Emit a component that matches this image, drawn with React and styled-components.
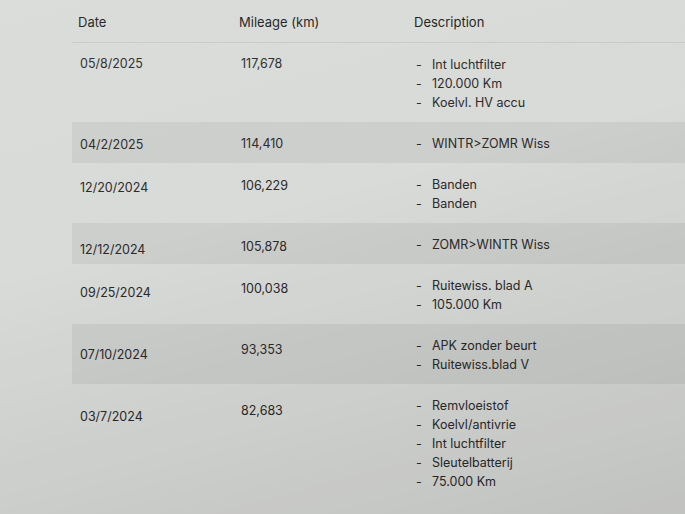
import React from 'react';
import styled, { createGlobalStyle } from 'styled-components';

const GlobalStyle = createGlobalStyle`
  html, body {
    margin: 0;
    padding: 0;
    background: #d9dbd8;
    font-family: Inter, "Liberation Sans", sans-serif;
  }
`;

// the photo gets darker towards the bottom right corner
const Shade = styled.div`
  position: fixed;
  inset: 0;
  pointer-events: none;
  background: linear-gradient(165deg, rgba(255, 255, 255, 0.06) 0%, rgba(0, 0, 0, 0) 40%, rgba(0, 0, 0, 0.11) 100%);
`;

const Page = styled.div`
  width: 685px;
  height: 514px;
  overflow: hidden;
  padding-left: 72px;
  box-sizing: border-box;
`;

const Table = styled.div`
  display: flex;
  flex-direction: column;
`;

const Row = styled.div`
  display: grid;
  grid-template-columns: 163px 176px 1fr;
  padding: 11px 0 10px;
  background: ${(p) => (p.$shaded ? '#cdcfcc' : 'transparent')};
  color: #2a2a2a;
  font-size: 12.5px;
  line-height: 19px;
`;

const HeadRow = styled(Row)`
  padding: 13px 0 10px;
  border-bottom: 1px solid rgba(0, 0, 0, 0.07);
  color: #1c1c1c;
  font-size: 13px;
`;

// the photo sags a little on the left, so the first columns sit lower
const Cell = styled.div`
  padding-left: ${(p) => p.$indent || 7}px;
  margin-top: ${(p) => p.$drop || 0}px;
  margin-bottom: ${(p) => -(p.$drop || 0)}px;
`;

const List = styled.ul`
  list-style: none;
  margin: 0;
  padding: 1px 0 0 5px;
`;

const Item = styled.li`
  display: flex;
  &::before {
    content: '-';
    width: 16px;
    flex: none;
  }
`;

const records = [
  { date: '05/8/2025', km: '117,678', items: ['Int luchtfilter', '120.000 Km', 'Koelvl. HV accu'] },
  { date: '04/2/2025', km: '114,410', items: ['WINTR>ZOMR Wiss'] },
  { date: '12/20/2024', km: '106,229', items: ['Banden', 'Banden'] },
  { date: '12/12/2024', km: '105,878', items: ['ZOMR>WINTR Wiss'] },
  { date: '09/25/2024', km: '100,038', items: ['Ruitewiss. blad A', '105.000 Km'] },
  { date: '07/10/2024', km: '93,353', items: ['APK zonder beurt', 'Ruitewiss.blad V'] },
  { date: '03/7/2024', km: '82,683', items: ['Remvloeistof', 'Koelvl/antivrie', 'Int luchtfilter', 'Sleutelbatterij', '75.000 Km'] },
];

export default function App() {
  return (
    <>
      <GlobalStyle />
      <Page>
        <Table>
          <HeadRow>
            <Cell $indent={6}>Date</Cell>
            <Cell $indent={4}>Mileage (km)</Cell>
            <Cell $indent={3}>Description</Cell>
          </HeadRow>
          {records.map((r, i) => (
            <Row key={r.date} $shaded={i % 2 === 1}>
              <Cell $indent={8} $drop={Math.min(i * 2, 12)}>{r.date}</Cell>
              <Cell $indent={6} $drop={Math.min(i, 6)}>{r.km}</Cell>
              <List>
                {r.items.map((t, j) => (
                  <Item key={j}>{t}</Item>
                ))}
              </List>
            </Row>
          ))}
        </Table>
      </Page>
      <Shade />
    </>
  );
}
